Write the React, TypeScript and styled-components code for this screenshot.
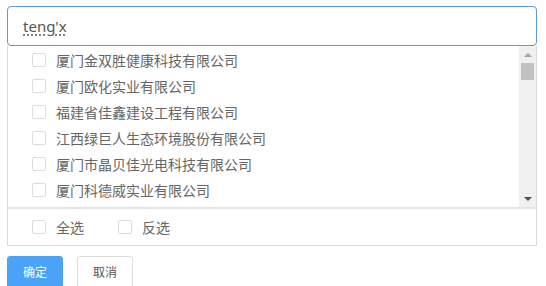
import styled, { createGlobalStyle } from 'styled-components';

const companies = [
  '厦门金双胜健康科技有限公司',
  '厦门欧化实业有限公司',
  '福建省佳鑫建设工程有限公司',
  '江西绿巨人生态环境股份有限公司',
  '厦门市晶贝佳光电科技有限公司',
  '厦门科德威实业有限公司',
];

const App = () => {
  return (
    <>
      <GlobalStyle />
      <Wrapper>
        <SearchBox>
          <Typed>teng'x</Typed>
        </SearchBox>
        <Panel>
          <ListArea>
            <Rows>
              {companies.map((name) => (
                <Row key={name}>
                  <Check />
                  <Label>{name}</Label>
                </Row>
              ))}
            </Rows>
            <ScrollBar>
              <Arrow $dir="up" />
              <Track>
                <Thumb />
              </Track>
              <Arrow $dir="down" />
            </ScrollBar>
          </ListArea>
          <Footer>
            <Row>
              <Check />
              <Label>全选</Label>
            </Row>
            <Row>
              <Check />
              <Label>反选</Label>
            </Row>
          </Footer>
        </Panel>
        <Actions>
          <Button $primary>确定</Button>
          <Button>取消</Button>
        </Actions>
      </Wrapper>
    </>
  );
};

export default App;

const GlobalStyle = createGlobalStyle`
  body {
    margin: 0;
    background: #fff;
    font-family: "Noto Sans CJK SC", "Noto Sans", sans-serif;
  }
`;

const Wrapper = styled.div`
  width: 530px;
  padding: 6px 0 0 7px;
`;

const SearchBox = styled.div`
  box-sizing: border-box;
  height: 40px;
  border: 1px solid #5b9bd6;
  border-radius: 4px;
  padding: 0 15px;
  display: flex;
  align-items: center;
`;

const Typed = styled.span`
  font-family: "Noto Sans", sans-serif;
  font-size: 15px;
  color: #555;
  text-decoration: underline dotted #555;
  text-underline-offset: 3px;
`;

const Panel = styled.div`
  border: 1px solid #dcdcdc;
  border-top: none;
`;

const ListArea = styled.div`
  display: flex;
  height: 161px;
  border-bottom: 2px solid #e4e4e4;
`;

const Rows = styled.div`
  flex: 1;
  overflow: hidden;
  padding: 1px 0 0 24px;
`;

const Row = styled.div`
  height: 26px;
  display: flex;
  align-items: center;
  gap: 10px;
`;

const Label = styled.span`
  font-size: 14px;
  line-height: 16px;
  color: #666;
`;

const Check = styled.span`
  box-sizing: border-box;
  width: 14px;
  height: 14px;
  border: 1px solid #dcdcdc;
  border-radius: 2px;
  background: #fff;
  flex-shrink: 0;
`;

const ScrollBar = styled.div`
  width: 17px;
  background: #f0f0f0;
  display: flex;
  flex-direction: column;
`;

const Arrow = styled.div<{ $dir: 'up' | 'down' }>`
  height: 17px;
  display: flex;
  align-items: center;
  justify-content: center;

  &::before {
    content: '';
    width: 0;
    height: 0;
    border-left: 4px solid transparent;
    border-right: 4px solid transparent;
    ${({ $dir }) =>
      $dir === 'up'
        ? 'border-bottom: 4px solid #a3a3a3;'
        : 'border-top: 4px solid #505050;'}
  }
`;

const Track = styled.div`
  flex: 1;
  padding: 0 2px;
`;

const Thumb = styled.div`
  height: 17px;
  background: #c1c1c1;
`;

const Footer = styled.div`
  height: 36px;
  display: flex;
  align-items: center;
  gap: 34px;
  padding-left: 24px;
`;

const Actions = styled.div`
  display: flex;
  gap: 14px;
  margin-top: 10px;
`;

const Button = styled.button<{ $primary?: boolean }>`
  box-sizing: border-box;
  width: 56px;
  height: 32px;
  border-radius: 3px;
  font-family: "Noto Sans CJK SC", sans-serif;
  font-size: 12px;
  line-height: 14px;
  border: 1px solid ${({ $primary }) => ($primary ? '#4aa3f6' : '#dcdcdc')};
  background: ${({ $primary }) => ($primary ? '#4aa3f6' : '#fff')};
  color: ${({ $primary }) => ($primary ? '#fff' : '#555')};
  padding: 0;
`;
